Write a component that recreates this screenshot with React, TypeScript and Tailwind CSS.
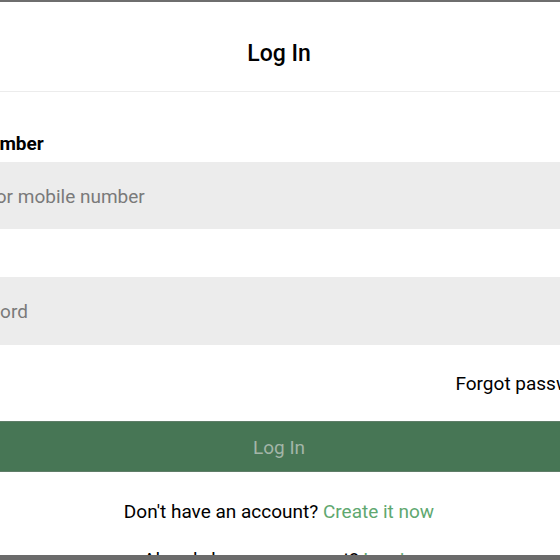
import React from 'react';

const App: React.FC = () => {
  return (
    <div className="relative w-[560px] h-[560px] overflow-hidden bg-white font-['Roboto',_'Liberation_Sans',_sans-serif] text-black">
      {/* backdrop edge */}
      <div className="h-[2px] bg-[#6e6e6e]" />

      <div className="ml-[-85px] w-[728px] flex flex-col">
        {/* Header */}
        <header className="pt-[38px] pb-[23px] border-b border-[#ececec] text-center text-[23px] leading-[28px] font-medium">
          Log In
        </header>

        <form className="flex flex-col" onSubmit={(e) => e.preventDefault()}>
          <label className="mt-[40px] mb-[6px] text-[19px] leading-[24px] font-bold">Mobile number</label>
          <div className="h-[67px] bg-[#ececec] flex items-center pt-[3px] pl-[29px] text-[19px] text-[#7a7a7a]">
            Email or mobile number
          </div>

          <label className="mt-[18px] mb-[6px] text-[19px] leading-[24px] font-bold">Password</label>
          <div className="h-[68px] bg-[#ececec] flex items-center pt-[3px] pl-[29px] text-[19px] text-[#7a7a7a]">
            Password
          </div>

          <div className="mt-[27px] flex justify-end pr-[36px]">
            <a className="text-[19px] leading-[24px] text-black">Forgot password?</a>
          </div>

          <button
            type="submit"
            className="mt-[25px] h-[51px] pt-[3px] bg-[#477655] border-y border-[#5f7d68] text-[19px] text-[#a3b5a8]"
          >
            Log In
          </button>
        </form>

        <p className="mt-[28px] text-center text-[19px] leading-[24px]">
          Don't have an account? <span className="text-[#5fa870]">Create it now</span>
        </p>
        <p className="mt-[24px] text-center text-[19px] leading-[24px]">
          Already have an account? <span className="text-[#5fa870]">Log in</span>
        </p>
      </div>

      {/* backdrop edge over the bottom */}
      <div className="absolute left-0 right-0 bottom-0 h-[5px] bg-[#6b6b6b]" />
    </div>
  );
};

export default App;
